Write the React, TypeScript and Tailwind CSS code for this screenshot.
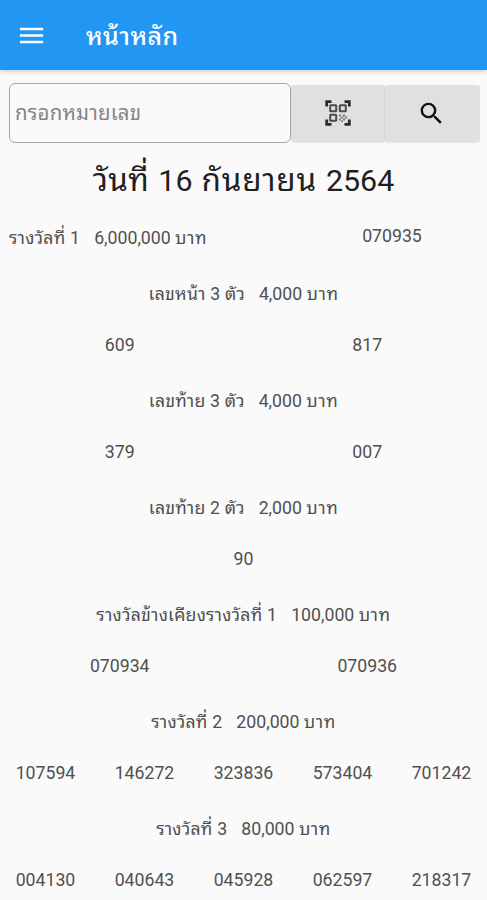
import { MdMenu, MdSearch } from 'react-icons/md';

type Prize = { title: string; amount: string; numbers: string[] };

const prizes: Prize[] = [
  { title: 'เลขหน้า 3 ตัว', amount: '4,000', numbers: ['609', '817'] },
  { title: 'เลขท้าย 3 ตัว', amount: '4,000', numbers: ['379', '007'] },
  { title: 'เลขท้าย 2 ตัว', amount: '2,000', numbers: ['90'] },
  { title: 'รางวัลข้างเคียงรางวัลที่ 1', amount: '100,000', numbers: ['070934', '070936'] },
  { title: 'รางวัลที่ 2', amount: '200,000', numbers: ['107594', '146272', '323836', '573404', '701242'] },
  { title: 'รางวัลที่ 3', amount: '80,000', numbers: ['004130', '040643', '045928', '062597', '218317'] },
];

function QrIcon() {
  return (
    <svg width="26" height="26" viewBox="0 0 26 26" fill="none" stroke="#2b2b2b">
      <path d="M1.700 6.500V1.700H6.500M19.500 1.700h4.800V6.500M1.700 19.500v4.800H6.500M19.500 24.300h4.800V19.500" strokeWidth="2.8" />
      <g stroke="#4b4b4b" strokeWidth="2">
        <rect x="5.200" y="5.200" width="6" height="6" rx="0.5" />
        <rect x="14.800" y="5.200" width="6" height="6" rx="0.5" />
        <rect x="5.200" y="14.800" width="6" height="6" rx="0.5" />
      </g>
      <path d="M14 14.500h2v2h-2zM18 14.500h2v2h-2zM16 16.500h2v2h-2zM20 16.500h2v2h-2zM14 18.500h2v2h-2zM18 18.500h2v2h-2zM16 20.500h2v1.500h-2z" fill="#777" stroke="none" />
    </svg>
  );
}

function Label({ title, amount }: { title: string; amount: string }) {
  return (
    <>
      <span className="tracking-[0.2px]">{title}</span>
      <span>{amount} <span className="tracking-[0.5px]">บาท</span></span>
    </>
  );
}

function PrizeRow({ prize }: { prize: Prize }) {
  return (
    <section>
      <h2 className="flex h-[55px] items-center justify-center gap-[14px] whitespace-nowrap">
        <Label title={prize.title} amount={prize.amount} />
      </h2>
      <div className="-mx-1 flex h-[52px] items-center pb-[5px]">
        {prize.numbers.map((n) => (
          <span key={n} className="flex-1 text-center">{n}</span>
        ))}
      </div>
    </section>
  );
}

export default function App() {
  return (
    <div className="h-[900px] overflow-hidden bg-[#fafafa] font-[Roboto,'Noto_Sans_Thai_Looped','Noto_Looped_Thai',Loma,Garuda,Waree,Umpush,'Droid_Sans_Thai',sans-serif] text-[17.7px] leading-6 text-[#505050]">
      <header className="flex h-[70px] items-center bg-[#2196f3] pt-[2px] pl-4 text-white shadow-[0_1px_5px_rgba(0,0,0,0.22)]">
        <MdMenu size={31} className="-mt-[2px]" />
        <h1 className="mt-[2px] ml-[39px] text-[25px] font-medium tracking-[0.4px]">หน้าหลัก</h1>
      </header>

      <div className="flex items-center pt-[13px] pr-[7px] pl-[9px]">
        <input
          className="h-[60px] w-[282px] rounded-[6px] border border-[#a6a6a6] px-[5px] text-[20.4px] tracking-[0.2px] outline-none placeholder:text-[#858585]"
          placeholder="กรอกหมายเลข"
        />
        <button className="flex h-[57px] w-[94px] items-center justify-center rounded-[3px] border-r border-[#d5d5d5] bg-[#e0e0e0] shadow-[0_1px_1px_rgba(0,0,0,0.08)]">
          <QrIcon />
        </button>
        <button className="flex h-[57px] flex-1 items-center justify-center rounded-[3px] bg-[#e0e0e0] pr-[2px] text-[#111] shadow-[0_1px_1px_rgba(0,0,0,0.08)]">
          <MdSearch size={29} />
        </button>
      </div>

      <div className="flex h-[76px] items-baseline justify-center gap-[9px] pt-[20px] text-[30.4px] leading-[36px] whitespace-nowrap text-[#1f1f1f]">
        <span className="text-[31.5px] tracking-[0.4px]">วันที่</span>
        <span>16</span>
        <span className="text-[31.5px] tracking-[0.8px]">กันยายน</span>
        <span>2564</span>
      </div>

      <div className="flex h-[47px] items-center pb-[9px] pl-[9px]">
        <div className="flex w-[294px] gap-[14px] whitespace-nowrap">
          <Label title="รางวัลที่ 1" amount="6,000,000" />
        </div>
        <span className="w-[178px] pb-1 text-center">070935</span>
      </div>

      {prizes.map((p) => (
        <PrizeRow key={p.title} prize={p} />
      ))}
    </div>
  );
}
